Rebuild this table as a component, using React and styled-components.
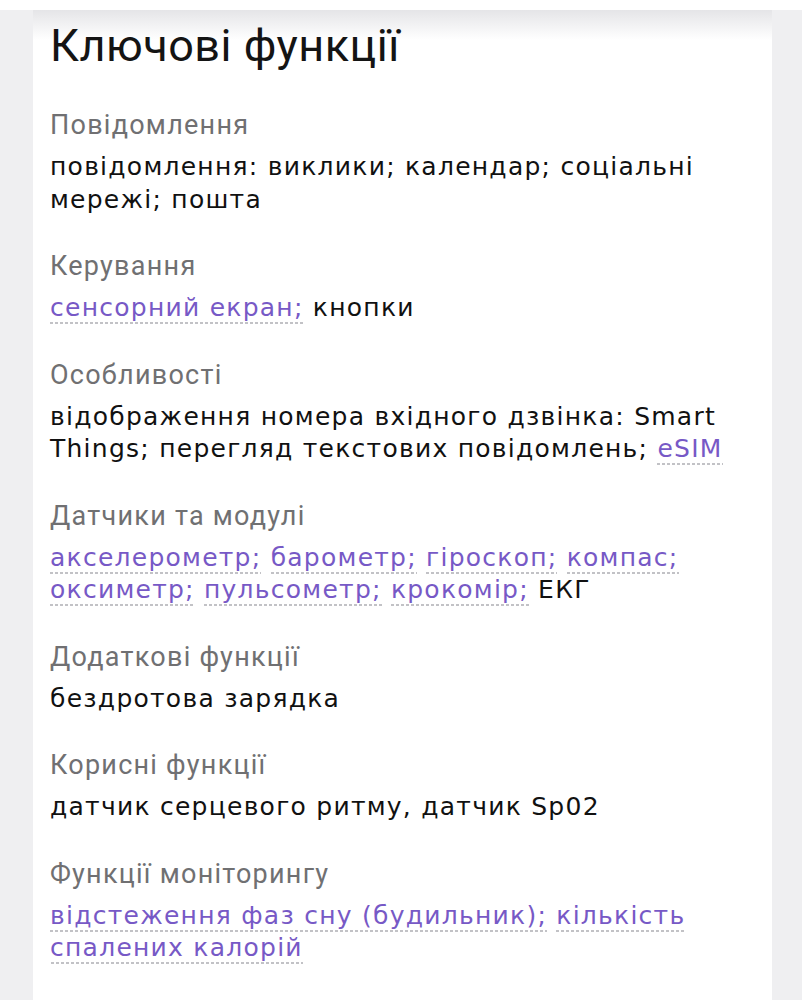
import React from "react";
import styled, { createGlobalStyle } from "styled-components";

const Global = createGlobalStyle`
  html, body { margin: 0; padding: 0; background: #ffffff; }
  body { font-family: "Inter", "Roboto", sans-serif; -webkit-font-smoothing: antialiased; }
`;

const Page = styled.div`
  padding-top: 10px;
  background: #ffffff;
`;

const Backdrop = styled.div`
  background: #efeff1;
  padding-left: 33px;
  padding-right: 30px;
  min-height: 990px;
`;

const Card = styled.section`
  position: relative;
  background: #ffffff;
  min-height: 990px;
  padding: 8px 17px 40px 17px;
  box-sizing: border-box;
  &::before {
    content: "";
    position: absolute;
    left: 0;
    right: 0;
    top: 0;
    height: 30px;
    background: linear-gradient(to bottom, rgba(226, 226, 229, 0.9), rgba(255, 255, 255, 0));
    pointer-events: none;
  }
`;

const Title = styled.h2`
  position: relative;
  margin: 0 0 35px 0;
  font-family: "Roboto", "Inter", sans-serif;
  font-weight: 400;
  font-size: 45px;
  line-height: 56px;
  color: #141414;
  letter-spacing: 0.5px;
`;

const List = styled.dl`
  margin: 0;
  display: flex;
  flex-direction: column;
  gap: 34px;
`;

const Item = styled.div`
  display: flex;
  flex-direction: column;
  gap: 10px;
`;

const Label = styled.dt`
  font-family: "Roboto", sans-serif;
  font-size: 27px;
  line-height: 32px;
  color: #707072;
  letter-spacing: 1.25px;
`;

const Value = styled.dd`
  margin: 0;
  font-family: "DejaVu Sans", sans-serif;
  font-size: 25px;
  line-height: 32.5px;
  color: #111111;
  letter-spacing: 1.25px;
`;

const Link = styled.a`
  color: #7759c6;
  text-decoration: none;
  padding-bottom: 2px;
  background-image: linear-gradient(to right, #c2c2c6 55%, rgba(255, 255, 255, 0) 0);
  background-size: 5px 2px;
  background-position: 0 100%;
  background-repeat: repeat-x;
`;

const data = [
  { label: "Повідомлення", parts: [{ t: "повідомлення: виклики; календар; соціальні мережі; пошта" }] },
  { label: "Керування", parts: [{ t: "сенсорний екран;", link: true }, { t: " кнопки" }] },
  {
    label: "Особливості",
    parts: [
      { t: "відображення номера вхідного дзвінка: Smart Things; перегляд текстових повідомлень; " },
      { t: "eSIM", link: true },
    ],
  },
  {
    label: "Датчики та модулі",
    parts: [
      { t: "акселерометр;", link: true },
      { t: " " },
      { t: "барометр;", link: true },
      { t: " " },
      { t: "гіроскоп;", link: true },
      { t: " " },
      { t: "компас;", link: true },
      { t: " " },
      { t: "оксиметр;", link: true },
      { t: " " },
      { t: "пульсометр;", link: true },
      { t: " " },
      { t: "крокомір;", link: true },
      { t: " ЕКГ" },
    ],
  },
  { label: "Додаткові функції", parts: [{ t: "бездротова зарядка" }] },
  { label: "Корисні функції", parts: [{ t: "датчик серцевого ритму, датчик Sp02" }] },
  {
    label: "Функції моніторингу",
    parts: [
      { t: "відстеження фаз сну (будильник);", link: true },
      { t: " " },
      { t: "кількість спалених калорій", link: true },
    ],
  },
];

export default function App() {
  return (
    <>
      <Global />
      <Page>
        <Backdrop>
          <Card>
            <Title>Ключові функції</Title>
            <List>
              {data.map((d) => (
                <Item key={d.label}>
                  <Label>{d.label}</Label>
                  <Value>
                    {d.parts.map((p, i) =>
                      p.link ? (
                        <Link key={i} href="#">
                          {p.t}
                        </Link>
                      ) : (
                        <React.Fragment key={i}>{p.t}</React.Fragment>
                      )
                    )}
                  </Value>
                </Item>
              ))}
            </List>
          </Card>
        </Backdrop>
      </Page>
    </>
  );
}
